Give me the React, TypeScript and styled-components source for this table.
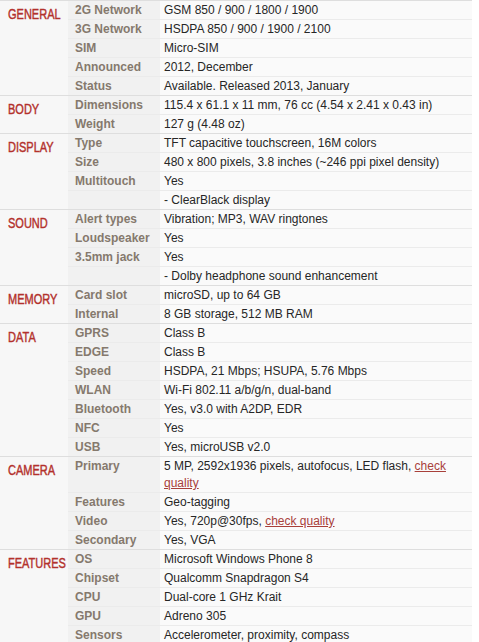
import React from "react";
import styled, { createGlobalStyle } from "styled-components";

const GlobalStyle = createGlobalStyle`
   body {
      margin: 0;
      background: #ffffff;
      font-family: "Liberation Sans", Arial, sans-serif;
   }
`;

type Spec = { label: string; value: React.ReactNode };
type Section = { title: string; rows: Spec[] };

const SpecTable = styled.div`
   width: 472px;
   font-size: 12px;
`;

const SectionBlock = styled.div`
   display: grid;
   grid-template-columns: 68px 1fr;
   border-top: 1px solid #dedede;
   background: #f7f7f7;
`;

const Category = styled.div`
   padding: 5px 0 0 8px;
   overflow: hidden;
`;

const CategoryText = styled.span`
   display: inline-block;
   font-family: "Liberation Sans Narrow", "Liberation Sans", sans-serif;
   font-size: 15.5px;
   line-height: 16px;
   color: #b3312c;
   -webkit-text-stroke: 0.45px #b3312c;
   text-transform: uppercase;
   transform: scaleX(0.71);
   transform-origin: left center;
   white-space: nowrap;
`;

const Rows = styled.div`
   display: flex;
   flex-direction: column;
`;

const Row = styled.div`
   display: grid;
   grid-template-columns: 92px 1fr;
   & + & {
      border-top: 1px solid #ebebeb;
   }
`;

const Label = styled.div`
   background: #f1f1f1;
   padding: 1px 0 0 7px;
   line-height: 17px;
   font-weight: bold;
   color: #85796d;
   white-space: nowrap;
`;

const Value = styled.div`
   background: #fafafa;
   padding: 1px 8px 0 4px;
   line-height: 17px;
   color: #262626;
`;

const QualityLink = styled.a`
   color: #a8403a;
   text-decoration: underline;
`;

const sections: Section[] = [
   {
      title: "General",
      rows: [
         { label: "2G Network", value: "GSM 850 / 900 / 1800 / 1900" },
         { label: "3G Network", value: "HSDPA 850 / 900 / 1900 / 2100" },
         { label: "SIM", value: "Micro-SIM" },
         { label: "Announced", value: "2012, December" },
         { label: "Status", value: "Available. Released 2013, January" },
      ],
   },
   {
      title: "Body",
      rows: [
         { label: "Dimensions", value: "115.4 x 61.1 x 11 mm, 76 cc (4.54 x 2.41 x 0.43 in)" },
         { label: "Weight", value: "127 g (4.48 oz)" },
      ],
   },
   {
      title: "Display",
      rows: [
         { label: "Type", value: "TFT capacitive touchscreen, 16M colors" },
         { label: "Size", value: "480 x 800 pixels, 3.8 inches (~246 ppi pixel density)" },
         { label: "Multitouch", value: "Yes" },
         { label: "", value: "- ClearBlack display" },
      ],
   },
   {
      title: "Sound",
      rows: [
         { label: "Alert types", value: "Vibration; MP3, WAV ringtones" },
         { label: "Loudspeaker", value: "Yes" },
         { label: "3.5mm jack", value: "Yes" },
         { label: "", value: "- Dolby headphone sound enhancement" },
      ],
   },
   {
      title: "Memory",
      rows: [
         { label: "Card slot", value: "microSD, up to 64 GB" },
         { label: "Internal", value: "8 GB storage, 512 MB RAM" },
      ],
   },
   {
      title: "Data",
      rows: [
         { label: "GPRS", value: "Class B" },
         { label: "EDGE", value: "Class B" },
         { label: "Speed", value: "HSDPA, 21 Mbps; HSUPA, 5.76 Mbps" },
         { label: "WLAN", value: "Wi-Fi 802.11 a/b/g/n, dual-band" },
         { label: "Bluetooth", value: "Yes, v3.0 with A2DP, EDR" },
         { label: "NFC", value: "Yes" },
         { label: "USB", value: "Yes, microUSB v2.0" },
      ],
   },
   {
      title: "Camera",
      rows: [
         {
            label: "Primary",
            value: (
               <>
                  5 MP, 2592x1936 pixels, autofocus, LED flash, <QualityLink href='#'>check quality</QualityLink>
               </>
            ),
         },
         { label: "Features", value: "Geo-tagging" },
         {
            label: "Video",
            value: (
               <>
                  Yes, 720p@30fps, <QualityLink href='#'>check quality</QualityLink>
               </>
            ),
         },
         { label: "Secondary", value: "Yes, VGA" },
      ],
   },
   {
      title: "Features",
      rows: [
         { label: "OS", value: "Microsoft Windows Phone 8" },
         { label: "Chipset", value: "Qualcomm Snapdragon S4" },
         { label: "CPU", value: "Dual-core 1 GHz Krait" },
         { label: "GPU", value: "Adreno 305" },
         { label: "Sensors", value: "Accelerometer, proximity, compass" },
      ],
   },
];

const App: React.FC = () => {
   return (
      <>
         <GlobalStyle />
         <SpecTable>
            {sections.map((section) => (
               <SectionBlock key={section.title}>
                  <Category>
                     <CategoryText>{section.title}</CategoryText>
                  </Category>
                  <Rows>
                     {section.rows.map((row, i) => (
                        <Row key={i}>
                           <Label>{row.label}</Label>
                           <Value>{row.value}</Value>
                        </Row>
                     ))}
                  </Rows>
               </SectionBlock>
            ))}
         </SpecTable>
      </>
   );
};

export default App;
